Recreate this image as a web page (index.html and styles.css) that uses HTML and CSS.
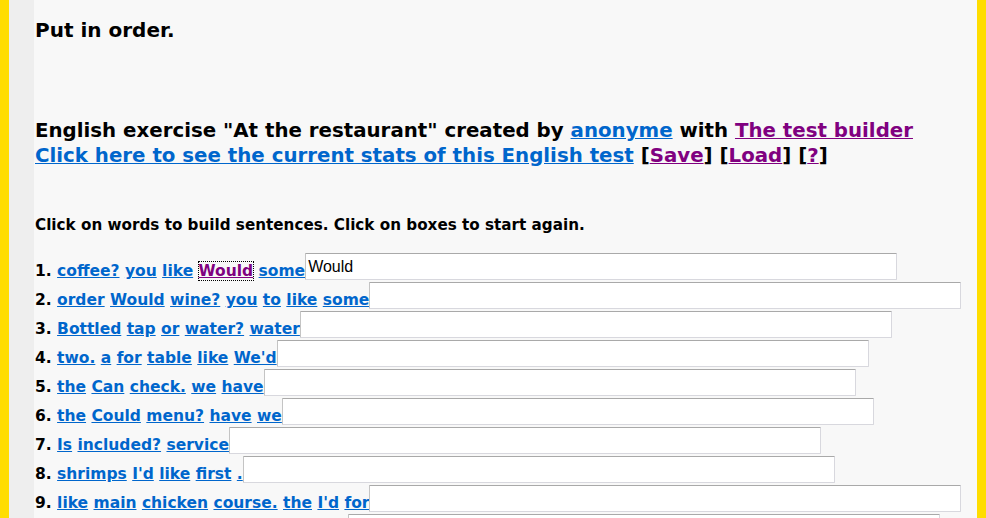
FILE: index.html
```html
<!DOCTYPE html>
<html>
<head>
<meta charset="utf-8">
<link rel="stylesheet" href="styles.css">
</head>
<body>
<div class="frame">
  <div class="page">
    <h2 class="title">Put in order.</h2>
    <div class="intro">English exercise "At the restaurant" created by <a href="#" class="lnk">anonyme</a> with <a href="#" class="lnk visited">The test builder</a><br>
    <a href="#" class="lnk">Click here to see the current stats of this English test</a> [<a href="#" class="lnk visited">Save</a>] [<a href="#" class="lnk visited">Load</a>] [<a href="#" class="lnk visited">?</a>]</div>
    <p class="instr">Click on words to build sentences. Click on boxes to start again.</p>
    <div class="rows">
      <div class="row">1. <a href="#" class="w">coffee?</a> <a href="#" class="w">you</a> <a href="#" class="w">like</a> <a href="#" class="w visited focus">Would</a> <a href="#" class="w">some</a><input class="box" type="text" value="Would"></div>
      <div class="row">2. <a href="#" class="w">order</a> <a href="#" class="w">Would</a> <a href="#" class="w">wine?</a> <a href="#" class="w">you</a> <a href="#" class="w">to</a> <a href="#" class="w">like</a> <a href="#" class="w">some</a><input class="box" type="text"></div>
      <div class="row">3. <a href="#" class="w">Bottled</a> <a href="#" class="w">tap</a> <a href="#" class="w">or</a> <a href="#" class="w">water?</a> <a href="#" class="w">water</a><input class="box" type="text"></div>
      <div class="row">4. <a href="#" class="w">two.</a> <a href="#" class="w">a</a> <a href="#" class="w">for</a> <a href="#" class="w">table</a> <a href="#" class="w">like</a> <a href="#" class="w">We'd</a><input class="box" type="text"></div>
      <div class="row">5. <a href="#" class="w">the</a> <a href="#" class="w">Can</a> <a href="#" class="w">check.</a> <a href="#" class="w">we</a> <a href="#" class="w">have</a><input class="box" type="text"></div>
      <div class="row">6. <a href="#" class="w">the</a> <a href="#" class="w">Could</a> <a href="#" class="w">menu?</a> <a href="#" class="w">have</a> <a href="#" class="w">we</a><input class="box" type="text"></div>
      <div class="row">7. <a href="#" class="w">Is</a> <a href="#" class="w">included?</a> <a href="#" class="w">service</a><input class="box" type="text"></div>
      <div class="row">8. <a href="#" class="w">shrimps</a> <a href="#" class="w">I'd</a> <a href="#" class="w">like</a> <a href="#" class="w">first</a> <a href="#" class="w">.</a><input class="box" type="text"></div>
      <div class="row">9. <a href="#" class="w">like</a> <a href="#" class="w">main</a> <a href="#" class="w">chicken</a> <a href="#" class="w">course.</a> <a href="#" class="w">the</a> <a href="#" class="w">I'd</a> <a href="#" class="w">for</a><input class="box" type="text"></div>
      <div class="row">10. <a href="#" class="w">Yes,</a> <a href="#" class="w">have</a> <a href="#" class="w">the</a> <a href="#" class="w">grilled</a> <a href="#" class="w">I'll</a> <a href="#" class="w">salmon.</a><input class="box" type="text"></div>
    </div>
  </div>
</div>
</body>
</html>
```

FILE: styles.css
```css
html, body {
  margin: 0;
  padding: 0;
  background: #ffdd00;
  height: 100%;
  overflow: hidden;
}
.frame {
  margin: 0 9px;
  height: 100%;
}
.page {
  background: #f8f8f8;
  border-left: 25px solid #eeeeee;
  min-height: 100%;
  padding: 1px 0 40px 1px;
  font-family: "DejaVu Sans", Verdana, sans-serif;
  font-weight: bold;
  color: #000;
}
.title {
  font-size: 20px;
  line-height: 25px;
  margin: 17px 0 0 0;
}
.intro {
  font-size: 19.8px;
  line-height: 25px;
  margin-top: 75px;
}
.lnk, .w {
  color: #0066cc;
  text-decoration: underline;
}
.visited {
  color: #800080;
}
.instr {
  font-size: 15.2px;
  line-height: 20px;
  margin: 47px 0 0 0;
}
.rows {
  margin-top: 18px;
}
.row {
  font-size: 15.5px;
  height: 29px;
  line-height: 22px;
  white-space: nowrap;
}
.focus {
  outline: 1px dotted #000;
  outline-offset: 0;
}
.box {
  width: 592px;
  height: 27px;
  box-sizing: border-box;
  border: 1px solid #d8d8de;
  border-top-color: #a9a9a9;
  border-left-color: #c4c4c4;
  border-radius: 1px;
  background: #fff;
  font-family: "Liberation Sans", Arial, sans-serif;
  font-size: 16px;
  font-weight: normal;
  color: #000;
  padding: 0 2px;
  margin: 0;
  vertical-align: 4px;
}
```
